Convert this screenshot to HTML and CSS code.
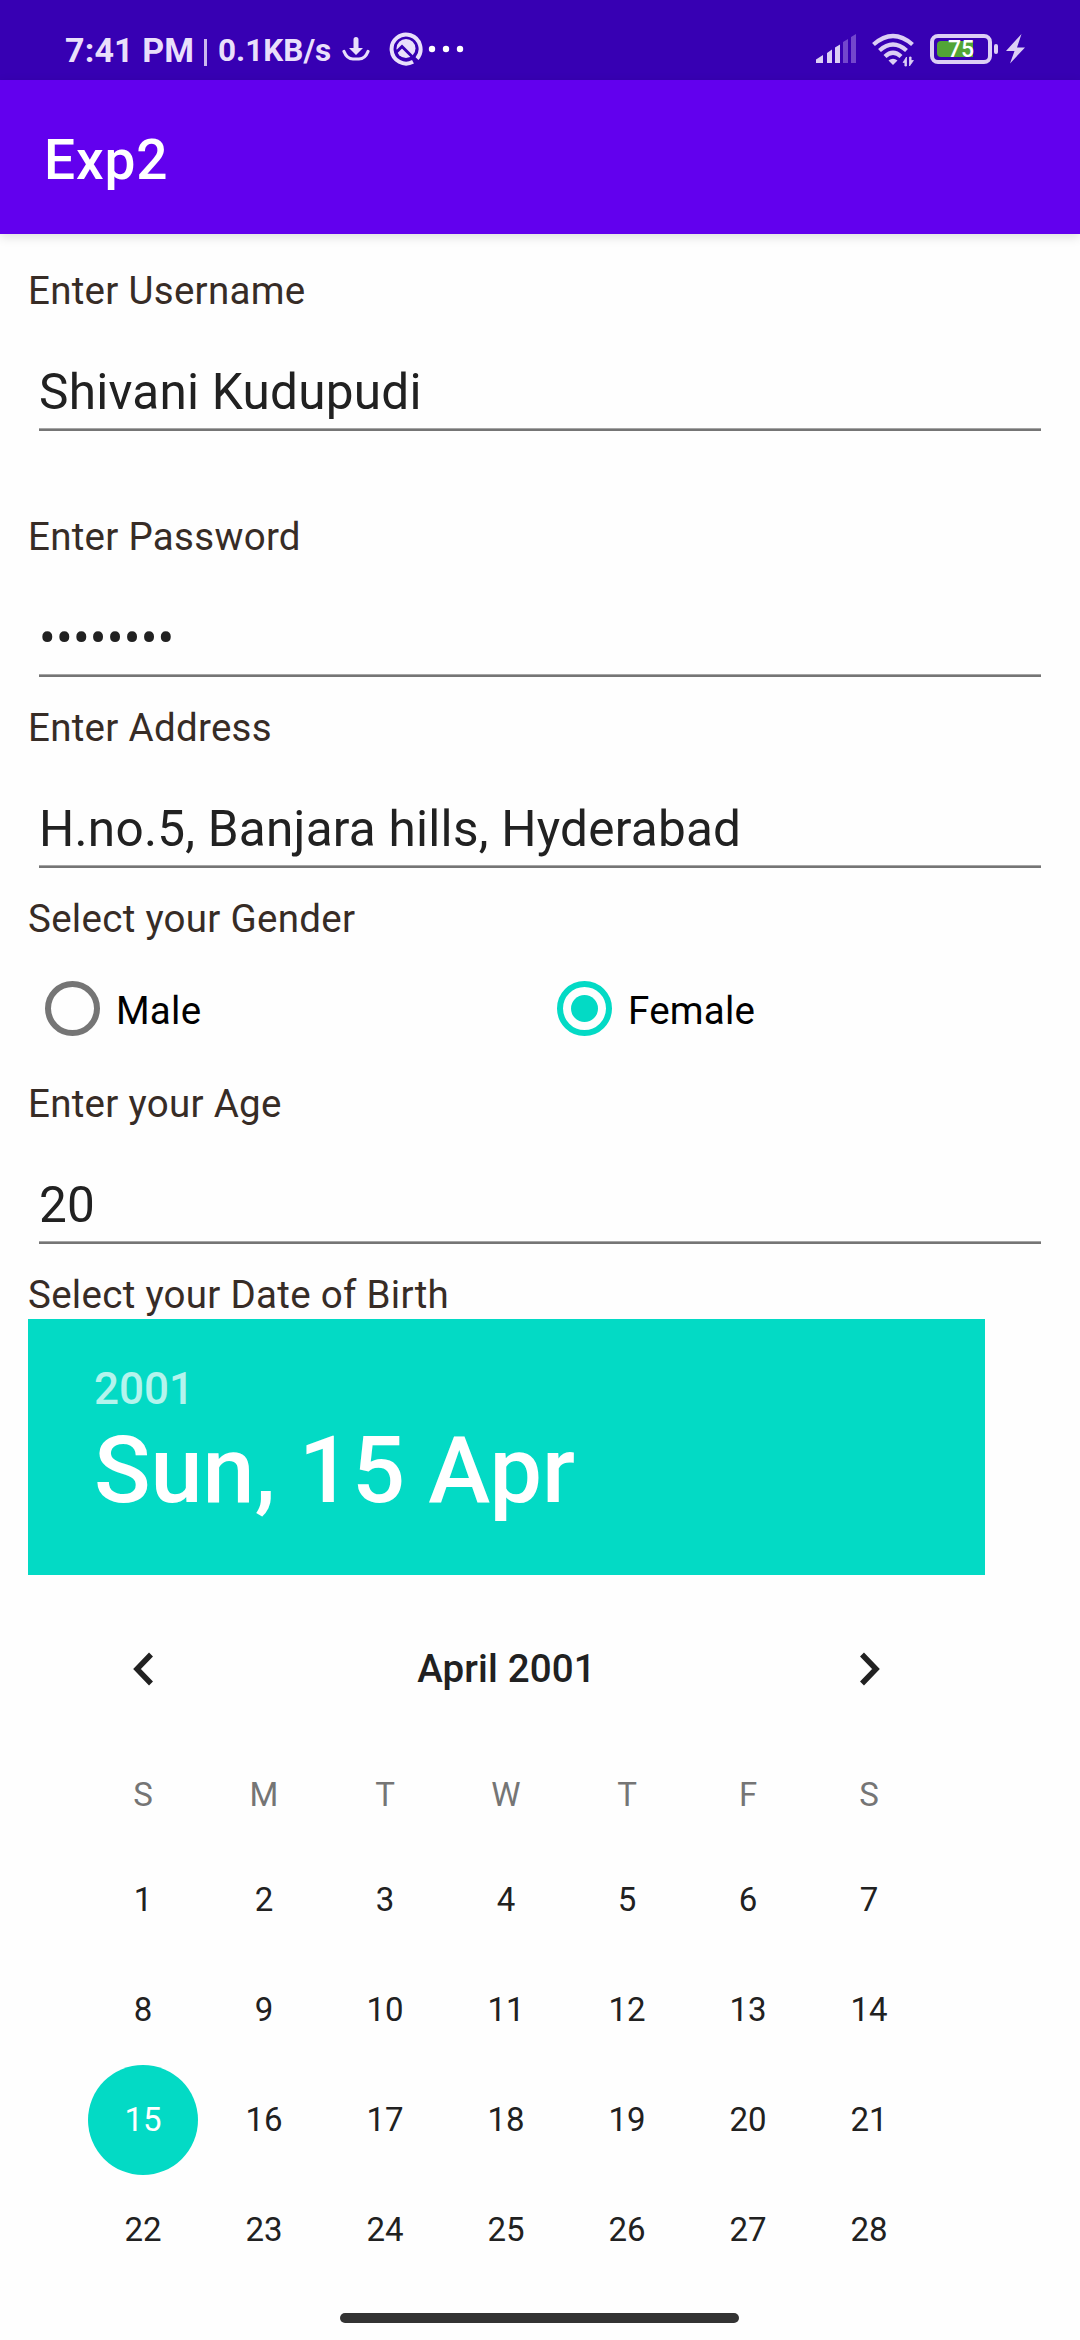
FILE: index.html
```html
<!DOCTYPE html>
<html lang="en">
<head>
<meta charset="utf-8">
<title>Exp2</title>
<link rel="stylesheet" href="styles.css">
</head>
<body>
<div class="screen">
  <header class="status-bar">
    <span class="clock">7:41 PM</span>
    <span class="divider"></span>
    <span class="net-speed">0.1KB/s</span>
    <svg class="icon-download" viewBox="342 30 28 36" width="28" height="36">
      <path d="M353.500 39.500a2.500 2.500 0 0 1 5 0V48h4.500l-7 7-7-7h4.500z" fill="#e9dffb"/>
      <path d="M344 51.500c2 5 5 7.500 9 7.500h6c4 0 7-2.500 9-7.500" fill="none" stroke="#e9dffb" stroke-width="3.200" stroke-linecap="round"/>
    </svg>
    <svg class="icon-app" viewBox="388 30 36 38" width="36" height="38">
      <path d="M413 61.800A14.500 14.500 0 1 1 417 58.600" fill="none" stroke="#e9dffb" stroke-width="4"/>
      <circle cx="406" cy="48.500" r="9.500" fill="#e9dffb"/>
      <path d="M396 52.500l6-6L416 60.500" fill="none" stroke="#3700b3" stroke-width="3"/>
    </svg>
    <svg class="icon-more" viewBox="428 40 38 18" width="38" height="18">
      <g fill="#fff"><circle cx="432" cy="49" r="3.200"/><circle cx="446" cy="49" r="3.200"/><circle cx="460" cy="49" r="3.200"/></g>
    </svg>
    <svg class="icon-signal" viewBox="814 33 42 32" width="42" height="32">
      <path d="M815 63v-3.500l7-4.500v8zM826 63V53l5-3.500V63zM834 63V47.500l5-3V63z" fill="#dccff5"/>
      <path d="M842 63V42l5-3v24zM850 63V37l5-3v29z" fill="#7347cd"/>
    </svg>
    <svg class="icon-wifi" viewBox="870 30 46 38" width="46" height="38">
      <g fill="none" stroke="#dccff5" stroke-width="4.300">
        <path d="M872.500 44.500Q892 27.500 911.500 44.500"/>
        <path d="M878.500 50.500Q892 38.500 905.500 50.500"/>
        <path d="M884 56.500Q892 49 900 56.500"/>
      </g>
      <path d="M887.500 60.500q4.500-3.500 9 0L892 65z" fill="#dccff5"/>
      <path d="M905.500 57v9h-1.600v-3.500h-1.800zM908.500 66v-9h1.600v3.500h2.300z" fill="#dccff5" stroke="#dccff5" stroke-width=".8"/>
    </svg>
    <div class="battery"><div class="battery-case"><div class="battery-fill"></div><span class="battery-level">75</span></div><div class="battery-cap"></div></div>
    <svg class="icon-bolt" viewBox="1004 32 22 34" width="22" height="34">
      <path d="M1020.500 34l-15.500 17h8.500l-4.500 12.500 15-16h-8z" fill="#dccff5"/>
    </svg>
  </header>

  <div class="app-bar"><h1 class="app-title">Exp2</h1></div>

  <main class="form">
    <div class="group group-spaced">
      <div class="label">Enter Username</div>
      <div class="field">Shivani Kudupudi</div>
    </div>
    <div class="group">
      <div class="label">Enter Password</div>
      <div class="field password">••••••••</div>
    </div>
    <div class="group">
      <div class="label">Enter Address</div>
      <div class="field">H.no.5, Banjara hills, Hyderabad</div>
    </div>
    <div class="gender">
      <div class="label">Select your Gender</div>
      <div class="options">
        <div class="option"><span class="radio"></span><span class="option-text">Male</span></div>
        <div class="option"><span class="radio checked"></span><span class="option-text">Female</span></div>
      </div>
    </div>
    <div class="group">
      <div class="label">Enter your Age</div>
      <div class="field">20</div>
    </div>
    <div class="label">Select your Date of Birth</div>

    <section class="date-picker">
      <div class="picked">
        <div class="picked-year">2001</div>
        <div class="picked-date">Sun, 15 Apr</div>
      </div>
      <div class="month-bar">
        <svg viewBox="0 0 22 34" width="22" height="34"><path d="M19 2.500L5 17l14 14.500" class="chevron"/></svg>
        <span>April 2001</span>
        <svg viewBox="0 0 22 34" width="22" height="34"><path d="M3 2.500L17 17 3 31.500" class="chevron"/></svg>
      </div>
      <div class="week weekdays"><span>S</span><span>M</span><span>T</span><span>W</span><span>T</span><span>F</span><span>S</span></div>
      <div class="week days">
        <span>1</span><span>2</span><span>3</span><span>4</span><span>5</span><span>6</span><span>7</span>
        <span>8</span><span>9</span><span>10</span><span>11</span><span>12</span><span>13</span><span>14</span>
        <span class="selected">15</span><span>16</span><span>17</span><span>18</span><span>19</span><span>20</span><span>21</span>
        <span>22</span><span>23</span><span>24</span><span>25</span><span>26</span><span>27</span><span>28</span>
      </div>
    </section>
  </main>
  <div class="home-indicator"></div>
</div>
</body>
</html>
```
FILE: styles.css
```css
* { box-sizing: border-box; }
body { margin: 0; background: #fff; font-family: Roboto, sans-serif; }
.screen { width: 1080px; height: 2340px; overflow: hidden; display: flex; flex-direction: column; background: #fefefe; }
svg { display: block; flex: none; }

.status-bar { flex: none; height: 80px; background: #3700b3; color: #e9dffb; display: flex; align-items: flex-start; font-weight: 700; white-space: nowrap; }
.clock { width: 132px; margin-left: 65px; margin-top: 30px; font-size: 34px; line-height: 40px; letter-spacing: .15px; }
.divider { width: 3px; height: 27px; margin: 39px 0 0 7px; background: #cbb8ee; }
.net-speed { width: 115px; margin: 31px 0 0 11px; font-size: 31.500px; line-height: 40px; }
.icon-download { margin: 30px 0 0 9px; }
.icon-app { margin: 30px 0 0 18px; }
.icon-more { margin: 40px 0 0 4px; }
.icon-signal { margin: 33px 0 0 auto; }
.icon-wifi { margin: 30px 0 0 14px; }
.battery { display: flex; align-items: center; gap: 2px; margin: 34px 0 0 13px; height: 30px; }
.battery-case { position: relative; width: 62px; height: 30px; border: 4px solid #dccff5; border-radius: 8px; padding: 3px; }
.battery-fill { width: 36px; height: 16px; border-radius: 4px 0 0 4px; background: #52a436; }
.battery-level { position: absolute; left: 14px; top: -1px; font-size: 23px; line-height: 25px; font-weight: 500; color: #fff; }
.battery-cap { width: 4px; height: 10px; border-radius: 2px; background: #dccff5; }
.icon-bolt { margin: 32px 53px 0 7px; }

.app-bar { flex: none; height: 154px; padding-left: 44px; display: flex; align-items: center; background: #6200ee; box-shadow: 0 3px 10px rgba(0,0,0,.13); }
.app-title { margin: 6px 0 0; color: #fff; font-size: 55px; font-weight: 500; line-height: 64px; letter-spacing: .9px; }

.form { flex: none; height: 2079px; padding: 33px 28px 0; }
.label { height: 48px; font-size: 38.500px; line-height: 48px; letter-spacing: .29px; color: #372c26; white-space: nowrap; }
.group { margin-bottom: 27px; }
.group-spaced { margin-bottom: 82px; }
.field { height: 73px; margin: 43px 11px 0; font-size: 49.500px; line-height: 68px; letter-spacing: .24px; color: #212121; background: linear-gradient(#a5a5a5 1px, #757575 1px) bottom / 100% 3px no-repeat; }
.gender { margin-bottom: 44px; }
.options { display: grid; grid-template-columns: 512px 512px; margin-top: 38px; }
.option { display: flex; align-items: center; height: 55px; padding-left: 17px; gap: 16px; color: #000; font-size: 38.500px; letter-spacing: .25px; }
.option-text { margin-top: 3px; }
.radio { flex: none; width: 55px; height: 55px; border: 6px solid #757575; border-radius: 50%; display: flex; align-items: center; justify-content: center; }
.radio.checked { border-color: #03dac5; }
.radio.checked::after { content: ""; width: 27px; height: 27px; border-radius: 50%; background: #03dac5; }

.date-picker { width: 957px; }
.picked { height: 256px; padding: 44px 66px 0; background: #03dac5; color: #fff; font-weight: 500; }
.picked-year { font-size: 44px; line-height: 52px; opacity: .7; }
.picked-date { font-size: 93.500px; line-height: 110px; }
.month-bar { height: 110px; margin: 39px 104px 0; display: flex; justify-content: space-between; align-items: center; font-size: 38.500px; font-weight: 500; color: #212121; }
.month-bar span { margin-top: -2px; letter-spacing: .15px; }
.chevron { fill: none; stroke: #212121; stroke-width: 5.500; }
.week { display: grid; grid-template-columns: repeat(7, 121px); justify-items: center; margin-left: 54.500px; font-size: 33px; }
.weekdays { height: 64px; margin-top: 39px; line-height: 64px; color: #757575; }
.days { grid-auto-rows: 110px; margin-top: 18px; line-height: 110px; color: #212121; }
.days span { width: 110px; text-align: center; }
.days .selected { border-radius: 50%; background: #03dac5; color: #fff; }

.home-indicator { flex: none; width: 399px; height: 10px; margin-left: 340px; border-radius: 5px; background: #333; }
```
